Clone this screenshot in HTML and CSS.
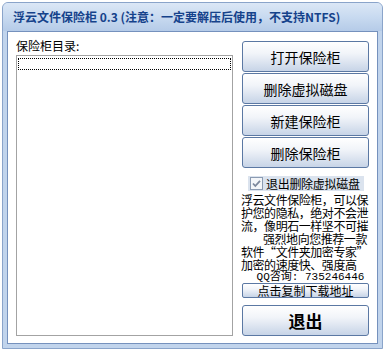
FILE: index.html
```html
<!DOCTYPE html>
<html lang="zh-CN">
<head>
  <meta charset="UTF-8">
  <meta name="viewport" content="width=device-width, initial-scale=1.0">
  <title>浮云文件保险柜 0.3</title>
  <link rel="stylesheet" href="styles.css">
</head>
<body>

  <div class="window">
    <div class="titlebar">浮云文件保险柜 0.3 (注意：一定要解压后使用，不支持NTFS)</div>

    <div class="client">
      <div class="left">
        <div class="label">保险柜目录:</div>
        <div class="listbox">
          <div class="focus-row"></div>
        </div>
      </div>

      <div class="right">
        <div class="btn-group">
          <button class="btn big">打开保险柜</button>
          <button class="btn big">删除虚拟磁盘</button>
          <button class="btn big">新建保险柜</button>
          <button class="btn big">删除保险柜</button>
        </div>

        <label class="check">
          <svg class="box" width="13" height="13" viewBox="0 0 13 13">
            <rect x="0.5" y="0.5" width="12" height="12" fill="#f4f6f9" stroke="#8b9bb2"/>
            <path d="M3 6.5 L5.3 9 L10 3.8" fill="none" stroke="#7c889c" stroke-width="1.8"/>
          </svg>
          退出删除虚拟磁盘
        </label>

        <div class="info">
          <div class="line">浮云文件保险柜，可以保</div>
          <div class="line">护您的隐私，绝对不会泄</div>
          <div class="line">流，像明石一样坚不可摧</div>
          <div class="line indent">强烈地向您推荐一款</div>
          <div class="line">软件“文件夹加密专家”</div>
          <div class="line">加密的速度快、强度高</div>
        </div>
        <div class="qq">QQ咨询: 735246446</div>

        <button class="btn small">点击复制下载地址</button>
        <button class="btn exit">退出</button>
      </div>
    </div>
  </div>

</body>
</html>
```

FILE: styles.css
```css
body {
  margin: 0;
  background-color: #ffffff;
  font-family: "Noto Sans CJK SC", "Liberation Sans", sans-serif;
}

.window {
  margin: 2px;
  width: 379px;
  height: 345px;
  border: 1px solid #8aa4ca;
  border-radius: 6px 6px 0 0;
  background-color: #c1d4ec;
  display: flex;
  flex-direction: column;
}

.titlebar {
  height: 28px;
  line-height: 28px;
  padding-left: 10px;
  border-radius: 5px 5px 0 0;
  background: linear-gradient(#dbe7f6, #c8daf0 50%, #b5cbe8);
  color: #15428b;
  font-size: 12px;
  font-weight: bold;
  white-space: nowrap;
}

.client {
  flex: 1;
  margin: 0 4px 4px 4px;
  border: 1px solid #7591bd;
  background-color: #ffffff;
  padding: 6px 9px 7px 8px;
  display: grid;
  grid-template-columns: 217px 127px;
  column-gap: 9px;
}

.left {
  display: flex;
  flex-direction: column;
}

.label {
  font-size: 12px;
  line-height: 16px;
  margin-bottom: 1px;
  color: #000;
}

.listbox {
  flex: 1;
  border: 1px solid #a3a3a3;
  padding: 2px 1px;
}

.focus-row {
  height: 10px;
  border: 1px dotted #000;
}

.right {
  display: flex;
  flex-direction: column;
  padding-top: 3px;
}

.btn-group {
  display: flex;
  flex-direction: column;
  gap: 1px;
}

.btn {
  display: block;
  width: 100%;
  margin: 0;
  padding: 0;
  border: 1px solid #5b78a3;
  border-radius: 3px;
  background: linear-gradient(#ffffff, #f1f4f9 40%, #c7d4e7);
  color: #000;
  font-family: "Noto Sans CJK SC", sans-serif;
  cursor: pointer;
}

.btn.big {
  height: 31px;
  font-size: 14px;
}

.check {
  display: flex;
  align-items: center;
  height: 15px;
  margin: 8px 5px 0 6px;
  background-color: #dbe3ee;
  font-size: 12px;
  letter-spacing: -0.3px;
  white-space: nowrap;
}

.box {
  margin: 0 3px 0 2px;
  flex: none;
}

.info {
  margin: 2px 0 0 -1px;
  color: #000;
}

.line {
  height: 13px;
  line-height: 13px;
  font-size: 12px;
  letter-spacing: -0.45px;
  white-space: nowrap;
}

.indent {
  padding-left: 22px;
}

.qq {
  height: 12px;
  line-height: 12px;
  padding-left: 10px;
  text-align: center;
  font-family: "Liberation Mono", "Noto Sans CJK SC", monospace;
  font-size: 11px;
  white-space: nowrap;
}

.btn.small {
  height: 15px;
  font-size: 12px;
  line-height: 13px;
  border-radius: 2px;
}

.btn.exit {
  height: 31px;
  margin-top: 7px;
  font-size: 17px;
  font-weight: bold;
}
```
